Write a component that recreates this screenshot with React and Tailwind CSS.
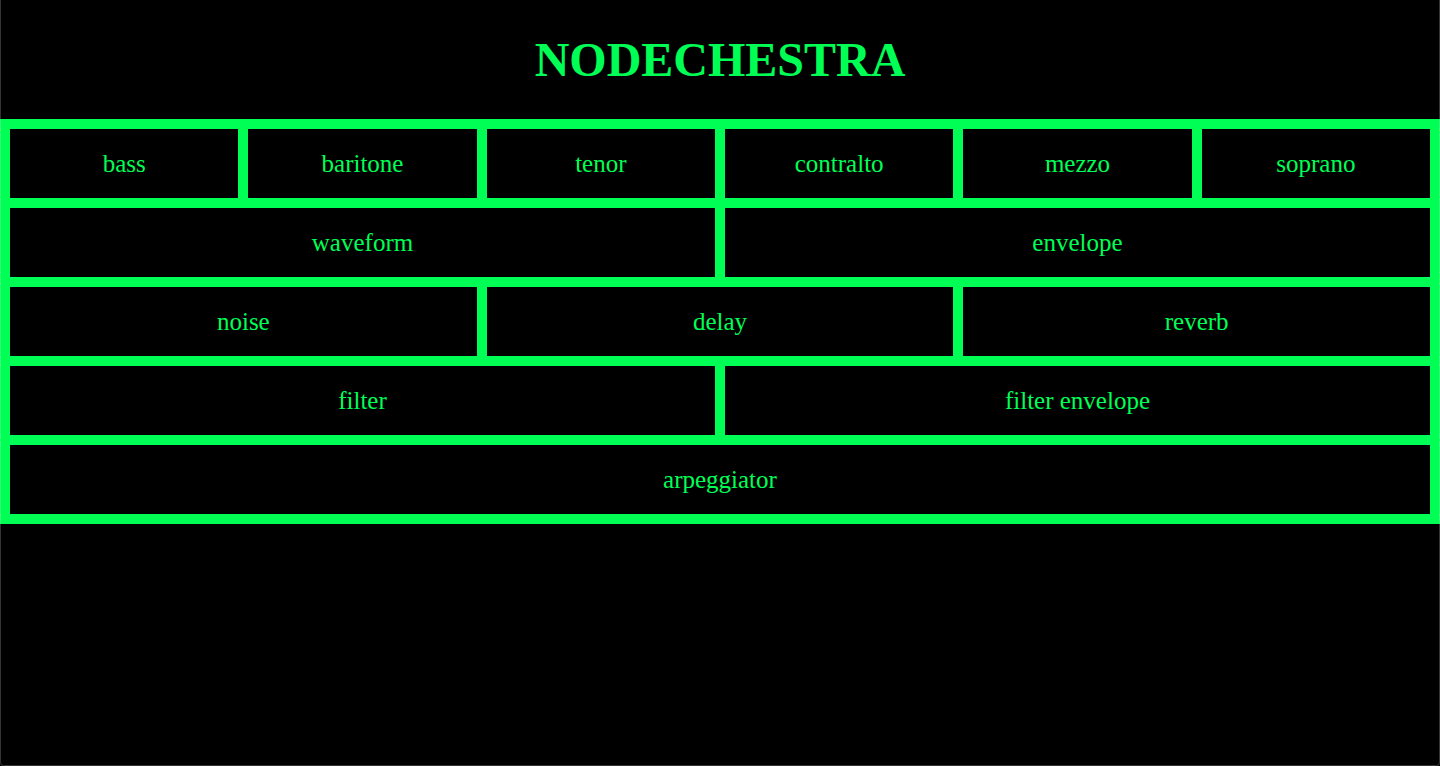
const rows = [
  ["bass", "baritone", "tenor", "contralto", "mezzo", "soprano"],
  ["waveform", "envelope"],
  ["noise", "delay", "reverb"],
  ["filter", "filter envelope"],
  ["arpeggiator"],
];

const spans = {
  1: "col-span-6",
  2: "col-span-3",
  3: "col-span-2",
  6: "col-span-1",
};

export default function App() {
  return (
    <div className="relative min-h-screen bg-black font-['Liberation_Serif',serif] text-[#00ff55]">
      <header className="px-4 py-8 text-center">
        <h1 className="text-[48px] leading-[55px] font-bold">NODECHESTRA</h1>
      </header>
      <main className="grid grid-cols-6 gap-[10px] bg-[#00ff55] p-[10px]">
        {rows.map((row) =>
          row.map((name) => (
            <button
              key={name}
              type="button"
              className={`${spans[row.length]} bg-black p-5 text-[25px] leading-[29px]`}
            >
              {name}
            </button>
          ))
        )}
      </main>
      {/* Thin frame around the window edge */}
      <div
        aria-hidden="true"
        className="pointer-events-none absolute inset-0 rounded-b border-x border-b border-white/20"
      />
    </div>
  );
}
